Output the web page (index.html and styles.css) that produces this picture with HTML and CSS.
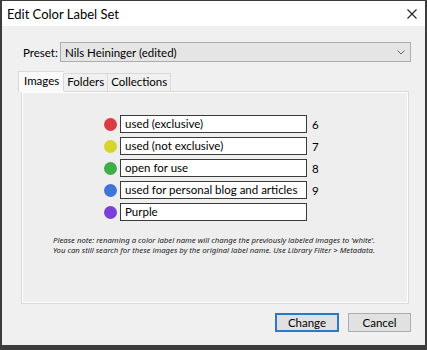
FILE: index.html
```html
<!DOCTYPE html>
<html lang="en">
<head>
    <meta charset="UTF-8">
    <title>Edit Color Label Set</title>
    <link rel="stylesheet" href="styles.css">
</head>
<body>

<div class="janela">
    <div class="titulo">
        <span>Edit Color Label Set</span>
        <svg class="fechar" width="10" height="10" viewBox="0 0 10 10">
            <path d="M0.5 0.5 L9.5 9.5 M9.5 0.5 L0.5 9.5" stroke="#222" stroke-width="1.1"/>
        </svg>
    </div>

    <div class="corpo">
        <div class="preset">
            <label>Preset:</label>
            <div class="select">
                <span>Nils Heininger (edited)</span>
                <svg width="8" height="5" viewBox="0 0 8 5">
                    <path d="M0.5 0.5 L4 4 L7.5 0.5" stroke="#666" fill="none" stroke-width="1"/>
                </svg>
            </div>
        </div>

        <div class="abas">
            <div class="aba ativa">Images</div>
            <div class="aba">Folders</div>
            <div class="aba">Collections</div>
        </div>

        <div class="painel">
            <div class="linhas">
                <div class="linha">
                    <span class="bola" style="background:#dc3b41"></span>
                    <div class="campo">used (exclusive)</div>
                    <span class="num">6</span>
                </div>
                <div class="linha">
                    <span class="bola" style="background:#d6d42a"></span>
                    <div class="campo">used (not exclusive)</div>
                    <span class="num">7</span>
                </div>
                <div class="linha">
                    <span class="bola" style="background:#3fae49"></span>
                    <div class="campo">open for use</div>
                    <span class="num">8</span>
                </div>
                <div class="linha">
                    <span class="bola" style="background:#3f74d8"></span>
                    <div class="campo">used for personal blog and articles</div>
                    <span class="num">9</span>
                </div>
                <div class="linha">
                    <span class="bola" style="background:#7a3fd6"></span>
                    <div class="campo">Purple</div>
                    <span class="num"></span>
                </div>
            </div>

            <p class="nota">Please note: renaming a color label name will change the previously labeled images to 'white'.<br>
            You can still search for these images by the original label name. Use Library Filter &gt; Metadata.</p>
        </div>

        <div class="botoes">
            <button class="padrao">Change</button>
            <button>Cancel</button>
        </div>
    </div>
</div>

</body>
</html>
```

FILE: styles.css
```css
* {
    margin: 0;
    padding: 0;
    box-sizing: border-box;
}

body {
    background: #3c3c3c;
    font-family: 'Lato', 'Noto Sans', sans-serif;
    font-size: 11.5px;
    color: #000;
    width: 427px;
    height: 350px;
    overflow: hidden;
}

.janela {
    margin: 1px 2px 0 2px;
    height: 344px;
    background: #f0f0f0;
    display: flex;
    flex-direction: column;
}

.titulo {
    background: #fff;
    height: 25px;
    display: flex;
    align-items: center;
    justify-content: space-between;
    padding: 0 8px 0 5px;
    font-size: 13px;
}

.corpo {
    flex: 1;
    padding: 16px 14px 0 15px;
    display: flex;
    flex-direction: column;
}

.preset {
    display: flex;
    align-items: center;
    padding-left: 6px;
}

.preset label {
    width: 37px;
}

.select {
    flex: 1;
    height: 20px;
    background: #e5e5e5;
    border: 1px solid #adadad;
    display: flex;
    align-items: center;
    justify-content: space-between;
    padding: 0 5px 0 4px;
}

.abas {
    display: flex;
    align-items: flex-end;
    margin-top: 8px;
    height: 21px;
    position: relative;
    z-index: 2;
}

.aba {
    height: 18px;
    border: 1px solid #d9d9d9;
    border-bottom: none;
    padding: 0 3px;
    line-height: 16px;
    background: #f0f0f0;
    margin-left: -1px;
}

.aba.ativa {
    height: 21px;
    margin-left: 1px;
    margin-bottom: -1px;
    background: #fafafa;
    padding: 0 5px;
    line-height: 18px;
    border-right: none;
}

.painel {
    margin: 0 2px 0 4px;
    height: 213px;
    border: 1px solid #d9d9d9;
    box-shadow: inset 0 0 0 1px #fff;
    background: #eeeeee;
}

.linhas {
    margin: 23px 0 0 82px;
    display: flex;
    flex-direction: column;
    gap: 4px;
}

.linha {
    display: flex;
    align-items: center;
    height: 18px;
}

.bola {
    width: 13px;
    height: 13px;
    border-radius: 50%;
    margin-right: 3px;
}

.campo {
    width: 187px;
    height: 18px;
    background: #fff;
    border: 1px solid #3a3a3a;
    padding-left: 4px;
    line-height: 15px;
}

.num {
    margin-left: 5px;
}

.nota {
    margin: 15px 0 0 31px;
    font-family: 'Noto Sans', sans-serif;
    font-style: italic;
    font-size: 7.75px;
    line-height: 9.5px;
    color: #222;
}

.botoes {
    display: flex;
    justify-content: flex-end;
    gap: 9px;
    margin-top: 9px;
}

.botoes button {
    width: 63px;
    height: 19px;
    background: #e1e1e1;
    border: 1px solid #adadad;
    font-family: inherit;
    font-size: 11.5px;
}

.botoes .padrao {
    border: 2px solid #2b79c7;
    width: 64px;
}
```
